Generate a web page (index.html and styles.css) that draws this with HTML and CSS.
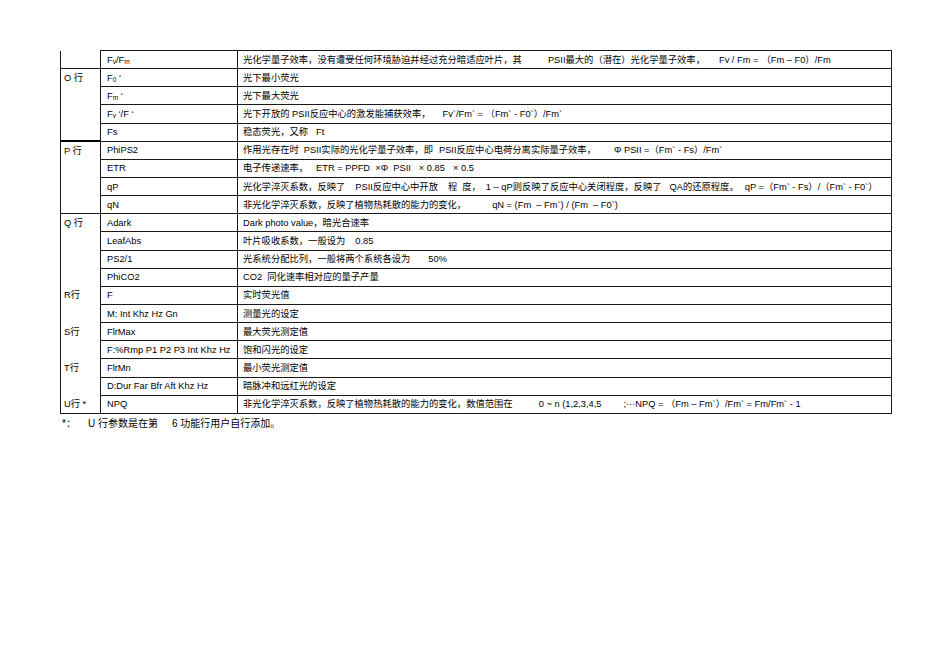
FILE: index.html
```html
<!DOCTYPE html>
<html lang="zh-CN">
<head>
<meta charset="utf-8">
<title>荧光参数表</title>
<link rel="stylesheet" href="styles.css">
</head>
<body>
<div class="page">
<table class="params">
  <colgroup><col class="c1"><col class="c2"><col class="c3"></colgroup>
  <tbody>
    <tr>
      <td class="grp first"></td>
      <td class="name">F<sub>v</sub>/F<sub>m</sub></td>
      <td class="desc">光化学量子效率，没有遭受任何环境胁迫并经过充分暗适应叶片，其<i class="g26"></i>PSII最大的（潜在）光化学量子效率，<i class="g14"></i>Fv / Fm =<i class="g3"></i>（Fm – F0）/Fm</td>
    </tr>
    <tr>
      <td class="grp" rowspan="4">O 行</td>
      <td class="name">F<sub>0</sub> ‘</td>
      <td class="desc">光下最小荧光</td>
    </tr>
    <tr>
      <td class="name">F<sub>m</sub> ‘</td>
      <td class="desc">光下最大荧光</td>
    </tr>
    <tr>
      <td class="name">F<sub>v</sub> ‘/F ‘</td>
      <td class="desc">光下开放的 PSII反应中心的激发能捕获效率，<i class="g12"></i>Fv`/Fm` = （Fm` - F0`）/Fm`</td>
    </tr>
    <tr>
      <td class="name">Fs</td>
      <td class="desc">稳态荧光，又称<i class="g8"></i>Ft</td>
    </tr>
    <tr>
      <td class="grp thick" rowspan="4">P 行</td>
      <td class="name">PhiPS2</td>
      <td class="desc">作用光存在时<i class="g5"></i>PSII实际的光化学量子效率，即<i class="g6"></i>PSII反应中心电荷分离实际量子效率，<i class="g18"></i>Φ PSII =（Fm` - Fs）/Fm`</td>
    </tr>
    <tr>
      <td class="name">ETR</td>
      <td class="desc">电子传递速率，<i class="g8"></i>ETR = PPFD  ×Φ  PSII<i class="g8"></i>× 0.85<i class="g8"></i>× 0.5</td>
    </tr>
    <tr>
      <td class="name">qP</td>
      <td class="desc">光化学淬灭系数，反映了<i class="g10"></i>PSII反应中心中开放<i class="g10"></i>程<i class="g5"></i>度，<i class="g5"></i>1 – qP则反映了反应中心关闭程度，反映了<i class="g8"></i>QA的还原程度。<i class="g6"></i>qP =（Fm` - Fs）/（Fm` - F0`）</td>
    </tr>
    <tr>
      <td class="name">qN</td>
      <td class="desc">非光化学淬灭系数，反映了植物热耗散的能力的变化，<i class="g26"></i>qN = (Fm  – Fm`) / (Fm  – F0`)</td>
    </tr>
    <tr>
      <td class="grp" rowspan="4">Q 行</td>
      <td class="name">Adark</td>
      <td class="desc">Dark photo value，暗光合速率</td>
    </tr>
    <tr>
      <td class="name">LeafAbs</td>
      <td class="desc">叶片吸收系数，一般设为<i class="g10"></i>0.85</td>
    </tr>
    <tr>
      <td class="name">PS2/1</td>
      <td class="desc">光系统分配比列，一般将两个系统各设为<i class="g18"></i>50%</td>
    </tr>
    <tr>
      <td class="name">PhiCO2</td>
      <td class="desc">CO2<i class="g5"></i>同化速率相对应的量子产量</td>
    </tr>
    <tr>
      <td class="grp open" rowspan="2">R行</td>
      <td class="name">F</td>
      <td class="desc">实时荧光值</td>
    </tr>
    <tr>
      <td class="name">M: Int Khz Hz Gn</td>
      <td class="desc">测量光的设定</td>
    </tr>
    <tr>
      <td class="grp open" rowspan="2">S行</td>
      <td class="name">FlrMax</td>
      <td class="desc">最大荧光测定值</td>
    </tr>
    <tr>
      <td class="name">F:%Rmp P1 P2 P3 Int Khz Hz</td>
      <td class="desc">饱和闪光的设定</td>
    </tr>
    <tr>
      <td class="grp open" rowspan="2">T行</td>
      <td class="name">FlrMn</td>
      <td class="desc">最小荧光测定值</td>
    </tr>
    <tr>
      <td class="name">D:Dur Far Bfr Aft Khz Hz</td>
      <td class="desc">暗脉冲和远红光的设定</td>
    </tr>
    <tr>
      <td class="grp open last">U行 *</td>
      <td class="name">NPQ</td>
      <td class="desc">非光化学淬灭系数，反映了植物热耗散的能力的变化，数值范围在<i class="g26"></i>0 ~ n (1,2,3,4,5<i class="g22"></i>;···NPQ = （Fm – Fm`）/Fm` = Fm/Fm` - 1</td>
    </tr>
  </tbody>
</table>
<p class="note"><span>*：</span><span class="note-u">U 行参数是在第</span><span class="note-6">6 功能行用户自行添加。</span></p>
</div>
</body>
</html>
```

FILE: styles.css
```css
html, body {
  margin: 0;
  padding: 0;
  background: #ffffff;
}

.page {
  padding: 50px 0 0 60px;
  font-family: "Liberation Sans", "Noto Sans CJK SC", sans-serif;
  color: #000000;
}

.params {
  border-collapse: collapse;
  table-layout: fixed;
  width: 831px;
  font-size: 9.3px;
}

.c1 { width: 40px; }
.c2 { width: 137px; }
.c3 { width: 654px; }

.params td {
  padding: 0;
  white-space: pre;
  overflow: hidden;
  line-height: 12px;
}

.params td.name,
.params td.desc {
  height: 17.15px;
  border: 1px solid #1a1a1a;
}

.params td.name { padding-left: 6px; }
.params td.desc { padding-left: 5px; }

.params td.grp {
  vertical-align: top;
  padding: 3px 0 0 3px;
  border-left: 1px solid #1a1a1a;
  border-top: 1px solid #1a1a1a;
}

.params td.grp.first { border-top: none; }
.params td.grp.thick { border-top: 2px solid #000000; }
.params td.grp.open { border-top: none; }
.params td.grp.last { border-bottom: 1px solid #1a1a1a; }

sub {
  font-size: 6.5px;
  vertical-align: -1px;
  line-height: 0;
}

.params i {
  display: inline-block;
  height: 1px;
}

.g3 { width: 3px; }
.g5 { width: 5px; }
.g6 { width: 6px; }
.g8 { width: 8px; }
.g10 { width: 10px; }
.g12 { width: 12px; }
.g14 { width: 14px; }
.g18 { width: 18px; }
.g22 { width: 22px; }
.g26 { width: 26px; }

.note {
  margin: 1px 0 0 2px;
  font-size: 10px;
  white-space: pre;
}

.note-u { margin-left: 12px; }
.note-6 { margin-left: 14px; }
```
